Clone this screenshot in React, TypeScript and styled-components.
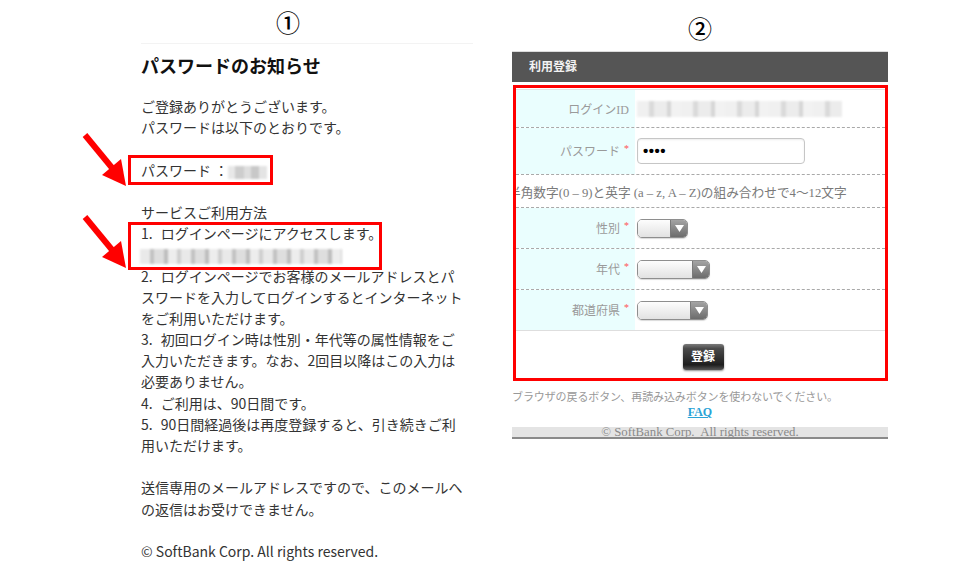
import styled, { createGlobalStyle } from 'styled-components';

const GlobalStyle = createGlobalStyle`
  html, body {
    margin: 0;
    padding: 0;
    background: #fff;
  }
  body {
    width: 980px;
    height: 568px;
    overflow: hidden;
  }
`;

const SANS = '"Noto Sans CJK JP", "Liberation Sans", sans-serif';
const SERIF = '"Liberation Serif", "Noto Sans CJK JP", serif';

const pwBlur =
  'linear-gradient(90deg, #e8e8e8 0 18%, #cdcdcd 18% 42%, #dedede 42% 58%, #c8c8c8 58% 80%, #e4e4e4 80% 100%)';
const urlBlur =
  'repeating-linear-gradient(90deg, #e9e9e9 0 10px, #c2c2c2 10px 14px, #dedede 14px 24px, #bdbdbd 24px 28px, #ededed 28px 37px, #cfcfcf 37px 41px)';
const idBlur =
  'repeating-linear-gradient(90deg, #f0f0f0 0 12px, #dadada 12px 17px, #ececec 17px 30px, #d6d6d6 30px 34px, #f2f2f2 34px 44px)';

export default function App() {
  return (
    <Page>
      <GlobalStyle />
      <LeftCol>
        <Num $h={43} $lh={44} $shift={38} $rule>
          ①
        </Num>
        <MailTitle>パスワードのお知らせ</MailTitle>
        <MailBody>
          <Line>ご登録ありがとうございます。</Line>
          <Line>パスワードは以下のとおりです。</Line>
          <Blank />
          <Highlight $top={5} $bottom={4} $w={145}>
            <Arrow />
            <Line>
              パスワード ：<Blur $w={39} $h={13} $bg={pwBlur} />
            </Line>
          </Highlight>
          <Blank />
          <Line>サービスご利用方法</Line>
          <Highlight $top={1} $bottom={4} $w={254}>
            <Arrow $top={-11} />
            <Line>
              <Idx>1.</Idx>ログインページにアクセスします。
            </Line>
            <Line>
              <UrlBlur $w={202} $h={15} $bg={urlBlur} />
            </Line>
          </Highlight>
          <Line>
            <Idx>2.</Idx>ログインページでお客様のメールアドレスとパ
          </Line>
          <Line>スワードを入力してログインするとインターネット</Line>
          <Line>をご利用いただけます。</Line>
          <Line>
            <Idx>3.</Idx>初回ログイン時は性別・年代等の属性情報をご
          </Line>
          <Line>入力いただきます。なお、2回目以降はこの入力は</Line>
          <Line>必要ありません。</Line>
          <Line>
            <Idx>4.</Idx>ご利用は、90日間です。
          </Line>
          <Line>
            <Idx>5.</Idx>90日間経過後は再度登録すると、引き続きご利
          </Line>
          <Line>用いただけます。</Line>
          <Blank />
          <Line>送信専用のメールアドレスですので、このメールへ</Line>
          <Line>の返信はお受けできません。</Line>
          <Blank />
          <Line>© SoftBank Corp. All rights reserved.</Line>
        </MailBody>
      </LeftCol>

      <RightCol>
        <Num $h={51} $lh={56} $shift={0}>
          ②
        </Num>
        <HeaderBar>利用登録</HeaderBar>
        <FormFrame>
          <FormTable>
            <FormRow $h={37}>
              <LabelCell>ログインID</LabelCell>
              <FieldCell>
                <Blur $w={205} $h={16} $bg={idBlur} />
              </FieldCell>
            </FormRow>
            <FormRow $h={46}>
              <LabelCell>
                パスワード<Req>*</Req>
              </LabelCell>
              <FieldCell>
                <PwInput>••••</PwInput>
              </FieldCell>
            </FormRow>
            <HintRow>
              <Hint>半角数字(0 – 9)と英字 (a – z, A – Z)の組み合わせで4〜12文字</Hint>
            </HintRow>
            <FormRow $h={40}>
              <LabelCell>
                性別<Req>*</Req>
              </LabelCell>
              <FieldCell>
                <SelectBox $w={51} />
              </FieldCell>
            </FormRow>
            <FormRow $h={40}>
              <LabelCell>
                年代<Req>*</Req>
              </LabelCell>
              <FieldCell>
                <SelectBox $w={73} />
              </FieldCell>
            </FormRow>
            <FormRow $h={40} $last>
              <LabelCell>
                都道府県<Req>*</Req>
              </LabelCell>
              <FieldCell>
                <SelectBox $w={71} />
              </FieldCell>
            </FormRow>
            <ButtonRow>
              <SubmitButton>登録</SubmitButton>
            </ButtonRow>
          </FormTable>
        </FormFrame>
        <Notice>ブラウザの戻るボタン、再読み込みボタンを使わないでください。</Notice>
        <FaqLink>FAQ</FaqLink>
        <Footer>© SoftBank Corp.&nbsp; All rights reserved.</Footer>
      </RightCol>
    </Page>
  );
}

function Arrow({ $top = -30 }: { $top?: number }) {
  return (
    <ArrowSvg style={{ top: $top }} width="50" height="60" viewBox="0 0 50 60">
      <line x1="5" y1="5" x2="33" y2="39" stroke="#f00" strokeWidth="6" />
      <polygon points="46,56 22,45 41,29" fill="#f00" />
    </ArrowSvg>
  );
}

function SelectBox({ $w }: { $w: number }) {
  return (
    <Select $w={$w}>
      <SelectFace />
      <SelectKnob>
        <svg width="9" height="7" viewBox="0 0 9 7">
          <polygon points="0,0 9,0 4.5,7" fill="#fff" />
        </svg>
      </SelectKnob>
    </Select>
  );
}

const Page = styled.div`
  display: flex;
  align-items: flex-start;
  width: 980px;
  height: 568px;
`;

const LeftCol = styled.div`
  margin-left: 141px;
  width: 332px;
  font-family: ${SANS};
`;

const RightCol = styled.div`
  margin-left: 39px;
  width: 376px;
  font-family: ${SERIF};
`;

const Num = styled.div<{ $h: number; $lh: number; $shift: number; $rule?: boolean }>`
  height: ${(p) => p.$h}px;
  line-height: ${(p) => p.$lh}px;
  padding-right: ${(p) => p.$shift}px;
  text-align: center;
  font-family: ${SANS};
  font-size: 24px;
  font-weight: 500;
  color: #000;
  border-bottom: 1px solid ${(p) => (p.$rule ? '#f3f3f3' : '#dcdcdc')};
`;

const MailTitle = styled.div`
  margin-top: 9px;
  font-size: 18px;
  line-height: 24px;
  font-weight: 700;
  color: #111;
`;

const MailBody = styled.div`
  margin-top: 19px;
  font-size: 14px;
  line-height: 21.2px;
  color: #333;
`;

const Line = styled.div`
  white-space: nowrap;
  height: 21.2px;
`;

const Idx = styled.span`
  margin-right: 8px;
`;

const Blank = styled.div`
  height: 21.2px;
`;

const Highlight = styled.div<{ $top: number; $bottom: number; $w: number }>`
  position: relative;

  &::after {
    content: '';
    position: absolute;
    left: -13px;
    top: -${(p) => p.$top}px;
    bottom: -${(p) => p.$bottom}px;
    width: ${(p) => p.$w}px;
    box-sizing: border-box;
    border: 3px solid #f00;
    pointer-events: none;
  }
`;

const ArrowSvg = styled.svg`
  position: absolute;
  left: -61px;
`;

const Blur = styled.span<{ $w: number; $h: number; $bg: string }>`
  display: inline-block;
  width: ${(p) => p.$w}px;
  height: ${(p) => p.$h}px;
  background: ${(p) => p.$bg};
  filter: blur(1.3px);
  vertical-align: -3px;
`;

const UrlBlur = styled(Blur)`
  margin-left: -1px;
  vertical-align: -4px;
`;

const HeaderBar = styled.div`
  height: 30px;
  line-height: 30px;
  padding-left: 17px;
  background: #555;
  color: #f2f2f2;
  font-size: 12px;
  font-weight: 700;
`;

const FormFrame = styled.div`
  margin-top: 3px;
  border: 3px solid #f00;
  margin-left: 1px;
`;

const FormTable = styled.div`
  margin-top: 1px;
  border-top: 1px solid #e2e2e2;
`;

const FormRow = styled.div<{ $h: number; $last?: boolean }>`
  display: grid;
  grid-template-columns: 119px 1fr;
  height: ${(p) => p.$h}px;
  border-bottom: 1px ${(p) => (p.$last ? 'solid #dedede' : 'dashed #a9a9a9')};
`;

const LabelCell = styled.div`
  display: flex;
  align-items: center;
  justify-content: flex-end;
  padding-right: 6px;
  background: #eafefe;
  font-size: 12px;
  color: #9a9a9a;
`;

const Req = styled.span`
  margin-left: 4px;
  color: #f55;
  font-size: 10px;
  line-height: 1;
  align-self: center;
  margin-top: -4px;
`;

const FieldCell = styled.div`
  display: flex;
  align-items: center;
  padding-left: 2px;
`;

const PwInput = styled.div`
  box-sizing: border-box;
  width: 168px;
  height: 26px;
  padding-left: 5px;
  border: 1px solid #c6c6c6;
  border-radius: 4px;
  box-shadow: inset 0 1px 2px rgba(0, 0, 0, 0.08);
  font-family: 'Liberation Sans', sans-serif;
  font-size: 15px;
  font-weight: 700;
  line-height: 24px;
  letter-spacing: 0.5px;
  color: #000;
`;

const HintRow = styled.div`
  height: 32px;
  display: flex;
  align-items: center;
  overflow: hidden;
  border-bottom: 1px dashed #a9a9a9;
`;

const Hint = styled.div`
  margin-left: -8px;
  white-space: nowrap;
  font-size: 12.7px;
  color: #7a7a7a;
`;

const Select = styled.div<{ $w: number }>`
  display: flex;
  box-sizing: border-box;
  width: ${(p) => p.$w}px;
  height: 19px;
  border: 1px solid #8e8e8e;
  border-radius: 5px;
  overflow: hidden;
  box-shadow: 0 1px 1px rgba(0, 0, 0, 0.15);
`;

const SelectFace = styled.div`
  flex: 1;
  background: linear-gradient(#fdfdfd, #e2e2e2);
`;

const SelectKnob = styled.div`
  width: 16px;
  display: flex;
  align-items: center;
  justify-content: center;
  border-left: 1px solid #7a7a7a;
  background: linear-gradient(#a4a4a4, #6c6c6c);
`;

const ButtonRow = styled.div`
  height: 47px;
  display: flex;
  justify-content: center;
  align-items: flex-start;
  padding-top: 13px;
  box-sizing: border-box;
  padding-left: 5px;
`;

const SubmitButton = styled.div`
  width: 41px;
  height: 26px;
  line-height: 26px;
  text-align: center;
  border-radius: 3px;
  background: linear-gradient(#7a7a7a 0%, #4a4a4a 18%, #333 50%, #1e1e1e 80%, #555 100%);
  box-shadow: 0 1px 2px rgba(0, 0, 0, 0.45);
  color: #fff;
  font-size: 12px;
  font-weight: 700;
`;

const Notice = styled.div`
  margin-top: 8px;
  font-size: 11px;
  line-height: 16px;
  letter-spacing: -0.1px;
  white-space: nowrap;
  color: #999;
`;

const FaqLink = styled.div`
  text-align: center;
  font-size: 12px;
  line-height: 14px;
  font-weight: 700;
  color: #2aa3d6;
  text-decoration: underline;
`;

const Footer = styled.div`
  margin-top: 8px;
  height: 10px;
  line-height: 11px;
  text-align: center;
  background: #e4e4e4;
  border-bottom: 2px solid #8a8a8a;
  font-size: 12.8px;
  color: #8a8a8a;
  white-space: nowrap;
`;
